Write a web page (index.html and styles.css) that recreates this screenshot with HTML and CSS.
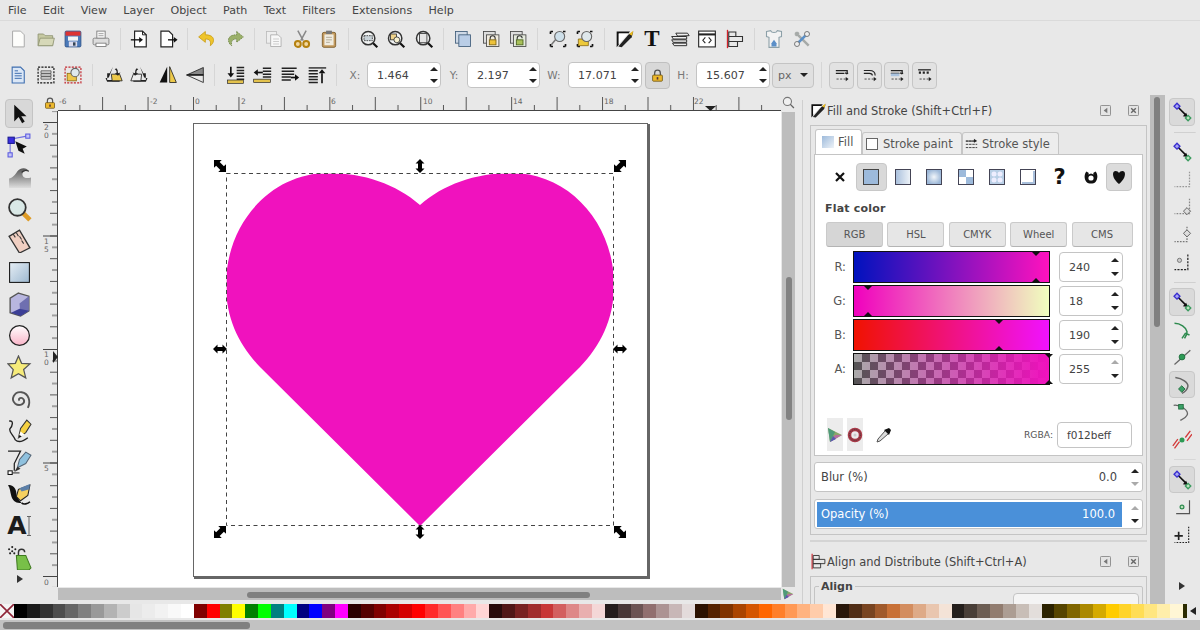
FILE: index.html
```html
<!DOCTYPE html>
<html lang="en">
<head>
<meta charset="utf-8">
<title>Inkscape</title>
<link rel="stylesheet" href="styles.css">
</head>
<body>
<svg class="defs" aria-hidden="true">
  <defs>
    <linearGradient id="gBlue" x1="0" y1="0" x2="1" y2="1"><stop offset="0" stop-color="#e6eef5"/><stop offset="1" stop-color="#9db8d0"/></linearGradient>
    <linearGradient id="gPink" x1="0" y1="0" x2="0" y2="1"><stop offset="0" stop-color="#fff"/><stop offset="1" stop-color="#f9b4c8"/></linearGradient>
    <linearGradient id="gWave" x1="0" y1="0" x2="0" y2="1"><stop offset="0" stop-color="#555"/><stop offset="1" stop-color="#ddd"/></linearGradient>
    <linearGradient id="gFlat" x1="0" y1="0" x2="1" y2="0"><stop offset="0" stop-color="#a8bfdc"/><stop offset="1" stop-color="#eef3f8"/></linearGradient>
    <radialGradient id="gRad"><stop offset="0" stop-color="#f2f6fa"/><stop offset="1" stop-color="#9db8d8"/></radialGradient>
    <pattern id="hTicks" x="193" y="95" width="45.45" height="16" patternUnits="userSpaceOnUse"><path d="M.5 2V16M23.2 10V16" stroke="#555" fill="none"/></pattern>
    <pattern id="vTicks" x="42" y="122" width="16" height="22.7" patternUnits="userSpaceOnUse"><path d="M8 .5H16M10 11.85H16" stroke="#555" fill="none"/></pattern>
    <symbol id="snap" viewBox="0 0 24 24"><path d="M7 6L17 16" stroke="#111" stroke-width="2"/><path d="M19 18l-6-1 4-4z" fill="#111"/><rect x="3.5" y="2.5" width="5" height="5" transform="rotate(45 6 5)" fill="#a9a9f0" stroke="#3a2fd0" stroke-width="1.6"/><rect x="17" y="17" width="4.6" height="4.6" transform="rotate(45 19.3 19.3)" fill="#bfe3bf" stroke="#3a9a5e" stroke-width="1.6"/></symbol>
    <symbol id="zoomBase" viewBox="0 0 24 24"><circle cx="11" cy="11" r="8" fill="#f2f4f4" stroke="#333" stroke-width="1.8"/><path d="M17 17l5 5" stroke="#111" stroke-width="2.6"/></symbol>
    <symbol id="page" viewBox="0 0 24 24"><path d="M5.5 2.5H15L19.5 7V21.5H5.5Z" fill="#fff" stroke="#222" stroke-width="1.4"/><path d="M15 2.5V7H19.5" fill="none" stroke="#222" stroke-width="1.2"/></symbol>
    <symbol id="win" viewBox="0 0 12 12"><rect x=".5" y=".5" width="11" height="11" rx="1" fill="#e4e4e4" stroke="#888"/></symbol>
    <symbol id="align" viewBox="0 0 24 24"><path d="M3 1V23" stroke="#d3232a" stroke-width="1.6"/><path d="M4.500 3.500H13V9H4.500ZM4.500 9H21V15H4.500ZM4.500 15H15V21H4.500Z" fill="#e8e8e8" stroke="#333" stroke-width="1.3"/></symbol>
    <symbol id="pen" viewBox="0 0 24 24"><path d="M2 3H18L16 5.500H4.500V19L2 22Z" fill="#111"/><path d="M4.500 5.500H16L4.500 18Z" fill="#fff"/><path d="M4 21L16 7L22 3L20 10L8 22Z" fill="#222"/><path d="M17 6L22 2L20.500 8Z" fill="#f0c020"/></symbol>
    <symbol id="spectrum" viewBox="0 0 16 16"><path d="M1 1L15 8L3 15Z" fill="#8aa66a"/><path d="M1 1L8 5L3 15Z" fill="#4f9a7a"/><path d="M3 15L8 8L15 8Z" fill="#b66ea0"/><path d="M3 15L6 9L9 12Z" fill="#5a5ab0"/></symbol>
    <symbol id="lock" viewBox="0 0 16 16"><path d="M4.500 8V5A3.500 3.500 0 0 1 11.500 5V8" fill="none" stroke="#555" stroke-width="1.6"/><rect x="2" y="7.500" width="12" height="7.500" rx="1" fill="#edb92e" stroke="#6d5310"/><rect x="7" y="10" width="2" height="3" fill="#533"/></symbol>
    <symbol id="tb" viewBox="0 0 24 24"><path d="M4 5H20V10M20 10L17 8M20 10L21 8M4 9H16" fill="none" stroke="#222" stroke-width="1.8"/><path d="M5 17H8M10 17H13M15 17H18" stroke="#333" stroke-width="1.2"/><path d="M18 14L22 17L18 20Z" fill="#222"/></symbol>
  </defs>
</svg>

<div class="app">
  <nav class="menubar">
    <span>File</span><span>Edit</span><span>View</span><span>Layer</span><span>Object</span><span>Path</span><span>Text</span><span>Filters</span><span>Extensions</span><span>Help</span>
  </nav>

  <div class="toolbar toolbar-one">
    <span class="cell"><svg viewBox="0 0 24 24"><path d="M5.500 2.500H15L19.500 7V21.500H5.500Z" fill="#fdfdfb" stroke="#aaa" stroke-width="1.2"/></svg></span>
    <span class="cell"><svg viewBox="0 0 24 24"><path d="M2.500 6H9L11 8H20V20H2.500Z" fill="#c6c9a2" stroke="#8d9170"/><path d="M2.500 20L5 11H22L20 20Z" fill="#d6d8b8" stroke="#8d9170"/></svg></span>
    <span class="cell"><svg viewBox="0 0 24 24"><rect x="2.500" y="2.500" width="19" height="19" rx="1.500" fill="#4a79b8" stroke="#2c4f85"/><rect x="3" y="3" width="18" height="5" fill="#d33"/><rect x="6" y="9" width="12" height="5" fill="#f4f4f4"/><rect x="7" y="15" width="10" height="6" fill="#dde"/><rect x="12" y="16" width="3" height="4" fill="#345"/></svg></span>
    <span class="cell"><svg viewBox="0 0 24 24"><rect x="7" y="2.500" width="10" height="9" fill="#f6f6f6" stroke="#777"/><path d="M9 5.500H15M9 8H15" stroke="#999"/><rect x="2.500" y="11" width="19" height="8" rx="1.500" fill="#ddd" stroke="#777"/><rect x="6" y="17" width="12" height="4" fill="#fff" stroke="#777"/></svg></span>
    <i class="sep"></i>
    <span class="cell"><svg viewBox="0 0 24 24"><use href="#page"/><path d="M1 13H13" stroke="#111" stroke-width="1.6"/><path d="M11 9.500L15.500 13L11 16.500Z" fill="#111"/></svg></span>
    <span class="cell"><svg viewBox="0 0 24 24"><path d="M3.500 2.500H13L17.500 7V21.500H3.500Z" fill="#fff" stroke="#222" stroke-width="1.4"/><path d="M12 13H21" stroke="#111" stroke-width="1.6"/><path d="M19 9.500L23.500 13L19 16.500Z" fill="#111"/></svg></span>
    <i class="sep"></i>
    <span class="cell"><svg viewBox="0 0 24 24"><path d="M10 3L2 9.500L10 16V12C15 12 17 14 16 20C21 17 23 7 10 7Z" fill="#efc52b" stroke="#c99c16"/></svg></span>
    <span class="cell"><svg viewBox="0 0 24 24"><path d="M14 3L22 9.500L14 16V12C9 12 7 14 8 20C3 17 1 7 14 7Z" fill="#9bb06a" stroke="#6f8546" stroke-dasharray="2 1"/></svg></span>
    <i class="sep"></i>
    <span class="cell"><svg viewBox="0 0 24 24"><rect x="3" y="3" width="12" height="14" fill="#eee" stroke="#bbb"/><path d="M8 7H17L20.500 10.500V21H8Z" fill="#f8f8f8" stroke="#aaa"/><path d="M11 12H18M11 15H18M11 18H18" stroke="#c4c4c4"/></svg></span>
    <span class="cell"><svg viewBox="0 0 24 24"><path d="M7 2L13.500 14M17 2L10.500 14" stroke="#888" stroke-width="1.8"/><circle cx="7" cy="18" r="3.500" fill="#f2d8a0" stroke="#b5810f" stroke-width="2.400"/><circle cx="17" cy="18" r="3.500" fill="#f2d8a0" stroke="#b5810f" stroke-width="2.400"/></svg></span>
    <span class="cell"><svg viewBox="0 0 24 24"><rect x="4" y="4" width="16" height="18" rx="2" fill="#c39a5e" stroke="#7a5a28"/><rect x="6.500" y="6.500" width="11" height="13" fill="#f0ece0"/><rect x="8.500" y="2" width="7" height="4" fill="#777"/><path d="M8.500 10H15.500M8.500 13H15.500M8.500 16H13" stroke="#a8a08c"/></svg></span>
    <i class="sep"></i>
    <span class="cell"><svg viewBox="0 0 24 24"><use href="#zoomBase"/><path d="M6 8H16V14H6Z" fill="#c8d2d8" stroke="#333" stroke-dasharray="2 1"/></svg></span>
    <span class="cell"><svg viewBox="0 0 24 24"><use href="#zoomBase"/><rect x="5.500" y="6" width="7" height="7" fill="#efd38a" stroke="#333"/><circle cx="13" cy="13" r="3.500" fill="#f6f0d0" stroke="#333"/></svg></span>
    <span class="cell"><svg viewBox="0 0 24 24"><use href="#zoomBase"/><rect x="6.500" y="5.500" width="9" height="11" fill="#e4e4e4" stroke="#333"/></svg></span>
    <i class="sep"></i>
    <span class="cell"><svg viewBox="0 0 24 24"><rect x="3" y="3" width="14" height="14" fill="#cfd9e6" stroke="#3d5a78"/><rect x="7" y="7" width="14" height="14" fill="#b9cde6" stroke="#3d5a78"/></svg></span>
    <span class="cell"><svg viewBox="0 0 24 24"><rect x="3" y="3" width="14" height="14" fill="#ddd" stroke="#444"/><rect x="6.500" y="7" width="15" height="14" fill="#f1ece0" stroke="#444"/><path d="M11 13V11A3 3 0 0 1 17 11V13" fill="none" stroke="#333" stroke-width="1.300"/><rect x="10" y="13" width="8" height="6" fill="#edc23a" stroke="#7a6010"/></svg></span>
    <span class="cell"><svg viewBox="0 0 24 24"><rect x="3" y="3" width="14" height="14" fill="#ddd" stroke="#444"/><rect x="6.500" y="7" width="15" height="14" fill="#e4eadc" stroke="#444"/><path d="M11 13V11A3 3 0 0 1 17 11" fill="none" stroke="#333" stroke-width="1.300"/><rect x="10" y="13" width="8" height="6" fill="#a8c05a" stroke="#46601a"/></svg></span>
    <i class="sep"></i>
    <span class="cell"><svg viewBox="0 0 24 24"><path d="M3 3H6M3 3V6M21 3H18M3 21V18M3 21H6M21 21H18M21 21V18" stroke="#111" stroke-width="2"/><circle cx="14" cy="9" r="6" fill="#cfe0ea" stroke="#666" stroke-width="1.300"/><path d="M9 13L4 19" stroke="#777" stroke-width="1.800"/></svg></span>
    <span class="cell"><svg viewBox="0 0 24 24"><path d="M3 3H6M3 3V6M21 3H18M3 21V18M3 21H6M21 21H18M21 21V18" stroke="#111" stroke-width="2"/><path d="M4 12H16V20H4Z" fill="#edc93b" stroke="#8a6c14"/><circle cx="14" cy="9" r="6" fill="#dfe8ec" stroke="#666" stroke-width="1.300"/></svg></span>
    <i class="sep"></i>
    <span class="cell"><svg viewBox="0 0 24 24"><use href="#pen"/></svg></span>
    <span class="cell"><span class="t-glyph">T</span></span>
    <span class="cell"><svg viewBox="0 0 24 24"><path d="M7 5H21L23 8L9 8.500ZM2 9H20V12H4ZM2 13H20V16H4ZM3 17H20V20H5Z" fill="#eee" stroke="#222" stroke-width="1.100"/></svg></span>
    <span class="cell"><svg viewBox="0 0 24 24"><rect x="2" y="2.500" width="20" height="19" fill="#fff" stroke="#222" stroke-width="1.300"/><path d="M2 6.500H22" stroke="#222" stroke-width="2.500"/><path d="M10 10L7 13.500L10 17M14 10L17 13.500L14 17" fill="none" stroke="#222" stroke-width="1.300"/></svg></span>
    <span class="cell"><svg viewBox="0 0 24 24"><use href="#align"/></svg></span>
    <i class="sep"></i>
    <span class="cell"><svg viewBox="0 0 24 24"><path d="M3 3L8 2C9 5 15 5 16 2L21 3V9L18 10V22H6V10L3 9Z" fill="#f3f3f3" stroke="#8ca0a8" stroke-width="1.300"/><path d="M9 17L12 13L15 17V21H9Z" fill="#5b8fc8"/></svg></span>
    <span class="cell"><svg viewBox="0 0 24 24"><path d="M4 4L20 20M4 8L8 4" stroke="#a6aaa8" stroke-width="3"/><path d="M20 4L4 20" stroke="#5b90c8" stroke-width="3.200"/><circle cx="6" cy="18" r="3" fill="#eee" stroke="#666"/><circle cx="18" cy="6" r="3" fill="#eee" stroke="#666"/></svg></span>
  </div>

  <div class="toolbar toolbar-two">
    <span class="cell"><svg viewBox="0 0 24 24"><path d="M5 2.500H15L19.500 7V21.500H5Z" fill="#dbe7f6" stroke="#3f6eaf" stroke-width="1.300"/><path d="M8 10H16.500M8 13H16.500M8 16H16.500M8 7H12" stroke="#3f6eaf" stroke-width="1.200"/></svg></span>
    <span class="cell"><svg viewBox="0 0 24 24"><rect x="2.500" y="2.500" width="19" height="19" fill="none" stroke="#111" stroke-width="1.400" stroke-dasharray="2.500 1.500"/><path d="M6 7H18V10H6ZM6 10.500H18V13.500H6ZM6 14H18V17H6Z" fill="#d8d8d8" stroke="#555"/></svg></span>
    <span class="cell"><svg viewBox="0 0 24 24"><rect x="2.500" y="2.500" width="19" height="19" fill="none" stroke="#c2262c" stroke-width="1.400" stroke-dasharray="2.500 1.500"/><rect x="5" y="10" width="11" height="9" fill="#edc64a" stroke="#8a6c14"/><circle cx="14.500" cy="9" r="5" fill="#dfe9ef" stroke="#666" stroke-width="1.300"/></svg></span>
    <i class="sep"></i>
    <span class="cell"><svg viewBox="0 0 24 24"><path d="M12 2L8 10H5V18H20V20H5L3 16L7 15Z" fill="#222"/><path d="M10 11H20L23 19H11Z" fill="#edc94a" stroke="#222"/><path d="M16 4A6 6 0 0 1 18 10L21 9L18 13L14 10L16 10A4 4 0 0 0 14 5Z" fill="#222"/></svg></span>
    <span class="cell"><svg viewBox="0 0 24 24"><path d="M12 2L16 10H19V18H4V20H19L21 16L17 15Z" fill="#222"/><path d="M14 11H4L1 19H13Z" fill="#eee" stroke="#222"/><path d="M8 4A6 6 0 0 0 6 10L3 9L6 13L10 10L8 10A4 4 0 0 1 10 5Z" fill="#222"/></svg></span>
    <span class="cell"><svg viewBox="0 0 24 24"><path d="M11 2V21H2Z" fill="#111"/><path d="M14 2V21H22Z" fill="#edc94a" stroke="#222"/></svg></span>
    <span class="cell"><svg viewBox="0 0 24 24"><path d="M2 12L22 3V12Z" fill="#888" stroke="#222"/><path d="M2 12L22 21V12Z" fill="#e8e8e8" stroke="#222"/><path d="M4 12H22" stroke="#111" stroke-width="1.500"/></svg></span>
    <i class="sep"></i>
    <span class="cell"><svg viewBox="0 0 24 24"><path d="M14 3H23M14 6.500H23M14 10H23M14 13.500H23M14 17H23" stroke="#222" stroke-width="1.800"/><path d="M7 2V12" stroke="#111" stroke-width="2"/><path d="M3 10L7 15L11 10Z" fill="#111"/><rect x="3" y="18" width="19" height="4" fill="#e3c24d" stroke="#222" stroke-width=".8"/></svg></span>
    <span class="cell"><svg viewBox="0 0 24 24"><path d="M13 4H23M13 7.500H23M13 11H23M13 14.500H23" stroke="#222" stroke-width="1.800"/><path d="M6 9H13" stroke="#111" stroke-width="2"/><path d="M7 5L2 9L7 13Z" fill="#111"/><rect x="2" y="17" width="20" height="4" fill="#e3c24d" stroke="#222" stroke-width=".8"/></svg></span>
    <span class="cell"><svg viewBox="0 0 24 24"><path d="M2 4H20M2 7.500H17M2 11H17M2 14.500H13M2 18H13" stroke="#222" stroke-width="1.800"/><path d="M13 15H19" stroke="#111" stroke-width="2"/><path d="M18 11L23 15L18 19Z" fill="#111"/></svg></span>
    <span class="cell"><svg viewBox="0 0 24 24"><path d="M2 3.500H23" stroke="#222" stroke-width="1.600"/><path d="M2 7H13M2 10.500H13M2 14H13M2 17.500H13M2 21H13" stroke="#222" stroke-width="1.800"/><path d="M18 10V22" stroke="#111" stroke-width="2"/><path d="M14 10L18 5L22 10Z" fill="#111"/></svg></span>
    <i class="sep"></i>
    <label class="coord coord-x">X:</label>
    <div class="spin spin-x"><span class="val">1.464</span><span class="arrows"><b class="up"></b><b class="down"></b></span></div>
    <label class="coord coord-y">Y:</label>
    <div class="spin spin-y"><span class="val">2.197</span><span class="arrows"><b class="up"></b><b class="down"></b></span></div>
    <label class="coord coord-w">W:</label>
    <div class="spin spin-x"><span class="val">17.071</span><span class="arrows"><b class="up"></b><b class="down"></b></span></div>
    <span class="lockbtn"><svg viewBox="0 0 16 16"><use href="#lock"/></svg></span>
    <label class="coord coord-h">H:</label>
    <div class="spin spin-x"><span class="val">15.607</span><span class="arrows"><b class="up"></b><b class="down"></b></span></div>
    <div class="combo"><span>px</span><b class="down"></b></div>
    <i class="sep sep-wide"></i>
    <div class="transform-btns">
      <span class="tbtn"><svg viewBox="0 0 24 24"><use href="#tb"/></svg></span>
      <span class="tbtn"><svg viewBox="0 0 24 24"><path d="M4 5H12C17 5 20 8 20 12M4 9H12C14 9 16 10 16 12" fill="none" stroke="#222" stroke-width="1.600"/><path d="M5 17H8M10 17H13M15 17H18" stroke="#333" stroke-width="1.200"/><path d="M18 14L22 17L18 20Z" fill="#222"/></svg></span>
      <span class="tbtn"><svg viewBox="0 0 24 24"><use href="#tb"/><rect x="4" y="9" width="12" height="4" fill="#a9c3e0"/></svg></span>
      <span class="tbtn"><svg viewBox="0 0 24 24"><path d="M3 4H21" stroke="#222" stroke-width="1.800"/><path d="M4 8H7M9.500 8H12.500M15 8H18" stroke="#222" stroke-width="3"/><path d="M5 17H8M10 17H13M15 17H18" stroke="#333" stroke-width="1.200"/><path d="M18 14L22 17L18 20Z" fill="#222"/></svg></span>
    </div>
  </div>

  <div class="main">
    <aside class="tools">
      <span class="tool tool-active"><svg viewBox="0 0 24 24"><path d="M6 2V21L11 16L15 23L18 21L14 15H20Z" fill="#111"/></svg></span>
      <span class="tool"><svg viewBox="0 0 24 24"><path d="M3 6L19 3M3 6L3 21" stroke="#6a6ae0"/><rect x="1" y="4" width="6" height="6" fill="#3b2ee0" stroke="#1a1a90"/><rect x="18" y="1" width="4" height="4" fill="#c6c6f5" stroke="#5a5ae0"/><rect x="1" y="19" width="4" height="4" fill="#c6c6f5" stroke="#5a5ae0"/><path d="M8 8L19 13L15 15L17 20L11 17Z" fill="#111"/></svg></span>
      <span class="tool"><svg viewBox="0 0 24 24"><path d="M2 22V13C5 13 8 9 10 6C13 2 19 2 21 6C17 5 14 7 15 10C16 13 20 13 23 12V22Z" fill="url(#gWave)"/><path d="M14 7C16 5 19 5 21 6" stroke="#333" fill="none"/></svg></span>
      <span class="tool"><svg viewBox="0 0 24 24"><path d="M14 14L22 22" stroke="#de9c26" stroke-width="4.500"/><circle cx="10" cy="10" r="8" fill="#d9e8e6" stroke="#333" stroke-width="1.700"/></svg></span>
      <span class="tool"><svg viewBox="0 0 24 24"><path d="M2 8L12 2L22 19L12 24Z" fill="#f0cfc2" stroke="#333" stroke-width="1.300"/><path d="M6 6L8 9M9 4.500L11 8M12 8L14 11M14 12L16 15" stroke="#333"/></svg></span>
      <span class="tool"><svg viewBox="0 0 24 24"><rect x="2.500" y="2.500" width="19" height="19" fill="url(#gBlue)" stroke="#111"/></svg></span>
      <span class="tool"><svg viewBox="0 0 24 24"><path d="M11 1L21 4V18L13 23L3 20V6Z" fill="#b8b6df" stroke="#555" stroke-width="1.300"/><path d="M3 6L12 11L21 4V18L13 23L12 11" fill="#6f6fb0"/><path d="M12 16L21 18L13 23L4 20Z" fill="#3c3f96"/></svg></span>
      <span class="tool"><svg viewBox="0 0 24 24"><circle cx="12" cy="12" r="9.500" fill="url(#gPink)" stroke="#222" stroke-width="1.200"/></svg></span>
      <span class="tool"><svg viewBox="0 0 24 24"><path d="M11 1L14 8L22 8.500L16 14L18 22L11 18L4 22L6 14L1 8.500L8 8Z" fill="#f6eb7a" stroke="#555" stroke-width="1.200"/></svg></span>
      <span class="tool"><svg viewBox="0 0 24 24"><path d="M12 13C10 11 14 9 16 12C18 16 12 19 8 16C3 12 7 4 14 5C21 6 23 14 20 20" fill="none" stroke="#555" stroke-width="1.800"/></svg></span>
      <span class="tool"><svg viewBox="0 0 24 24"><path d="M2 3C7 2 5 8 3 10C1 13 6 16 8 21C11 24 16 22 20 19" fill="none" stroke="#222" stroke-width="1.300"/><path d="M11 19L13 10L19 2L23 6L18 14Z" fill="#f5d040" stroke="#333"/><path d="M11 19L13 13L17 16Z" fill="#fff"/><path d="M11 19L12 16L14 18Z" fill="#111"/></svg></span>
      <span class="tool"><svg viewBox="0 0 24 24"><path d="M1 1H13L7 13V20" fill="none" stroke="#222" stroke-width="1.200"/><rect x="1" y="20" width="4" height="3.500" fill="#fff" stroke="#111"/><path d="M5 22H12" stroke="#333"/><path d="M10 17L12 9L18 2L23 5L18 13Z" fill="#8fc1de" stroke="#567"/><path d="M7 21L10 16L13 18Z" fill="#333"/></svg></span>
      <span class="tool"><svg viewBox="0 0 24 24"><path d="M1 3C5 2 9 6 9 11C9 14 12 18 14 20C9 21 5 18 4 13C3 9 3 6 1 3Z" fill="#111"/><path d="M14 20C16 22 20 21 22 19" fill="none" stroke="#111" stroke-width="1.500"/><path d="M9 14L11 7L22 3L20 13L13 18Z" fill="#f5d060" stroke="#222"/><path d="M12 6L22 2L21.500 7L14 9Z" fill="#5b7fa8"/></svg></span>
      <span class="tool tool-text"><span class="a-glyph">A</span><svg class="ibeam" viewBox="0 0 4 20"><path d="M0 .5H4M2 .5V19.500M0 19.500H4" stroke="#666" fill="none"/></svg></span>
      <span class="tool"><svg viewBox="0 0 24 24"><circle cx="2" cy="4" r="1" fill="#222"/><circle cx="5" cy="2" r="1" fill="#222"/><circle cx="5" cy="6" r="1" fill="#222"/><circle cx="8" cy="4" r="1" fill="#222"/><circle cx="3" cy="8" r="1" fill="#222"/><circle cx="7" cy="8" r="1" fill="#222"/><path d="M11 10V7A3 3 0 0 1 17 7" fill="none" stroke="#333" stroke-width="1.400"/><path d="M9 10H18L23 22L21 24H10Z" fill="#78c048" stroke="#3f7a20"/></svg></span>
      <b class="more"></b>
    </aside>

    <section class="workspace">
      <div class="corner"><svg viewBox="0 0 16 16"><use href="#lock"/></svg></div>
      <svg class="hruler" viewBox="58 95 723 16">
        <rect x="58" y="95" width="723" height="16" fill="url(#hTicks)"/>
        <path d="M58 110.500H781" stroke="#444"/>
        <g class="rtext"><text x="59" y="104">-6</text><text x="150" y="104">-2</text><text x="195" y="104">0</text><text x="241" y="104">2</text><text x="331" y="104">6</text><text x="423" y="104">10</text><text x="513" y="104">14</text><text x="604" y="104">18</text><text x="694" y="104">22</text></g>
        <path d="M705 106H716L710.500 111Z" fill="#222"/>
      </svg>
      <div class="corner-r"><svg viewBox="0 0 24 24"><circle cx="10" cy="10" r="7.500" fill="#f0f0f0" stroke="#777" stroke-width="2"/><path d="M15 15L22 22" stroke="#666" stroke-width="2.500"/></svg></div>
      <svg class="vruler" viewBox="42 111 16 476">
        <rect x="42" y="111" width="16" height="476" fill="url(#vTicks)"/>
        <path d="M57.500 111V587M43 122.500H58M43 236H58M43 349.500H58M43 463H58M43 576.500H58" stroke="#444"/>
        <g class="rtext"><text x="44" y="130">2</text><text x="44" y="138">0</text><text x="44" y="244">1</text><text x="44" y="252">5</text><text x="44" y="357">1</text><text x="44" y="365">0</text><text x="44" y="471">5</text><text x="44" y="585">0</text></g>
        <path d="M53 351V363L58 357Z" fill="#222"/>
      </svg>
      <svg class="canvas" viewBox="58 111 723 476">
        <rect x="58" y="111" width="723" height="476" fill="#fff"/>
        <rect x="194" y="124" width="456" height="455" fill="#666"/>
        <rect x="193.500" y="123.500" width="454" height="453" fill="#fff" stroke="#666"/>
        <path d="M420 205C396 184 364 173 328 173C272 173 226 222 226 285C226 320 240 346 260 367L420 526L580 367C600 346 614 320 614 285C614 222 568 173 512 173C476 173 444 184 420 205Z" fill="#f012be"/>
        <rect x="226.500" y="173.500" width="387" height="352" fill="none" stroke="#fff" stroke-opacity=".7"/>
        <rect x="226.500" y="173.500" width="387" height="352" fill="none" stroke="#444" stroke-dasharray="4 3.500"/>
        <defs>
          <path id="handleDiag" d="M-8.500 0L-3-5.500V-2.500H3V-5.500L8.500 0L3 5.500V2.500H-3V5.500Z" fill="#000"/>
          <path id="handleAxis" d="M-7 0L-2.500-4.500V-2H2.500V-4.500L7 0L2.500 4.500V2H-2.500V4.500Z" fill="#000"/>
        </defs>
        <use href="#handleDiag" transform="translate(220 166) rotate(45)"/>
        <use href="#handleAxis" transform="translate(420 166) rotate(90)"/>
        <use href="#handleDiag" transform="translate(620 166) rotate(-45)"/>
        <use href="#handleAxis" transform="translate(220 349)"/>
        <use href="#handleAxis" transform="translate(620 349)"/>
        <use href="#handleDiag" transform="translate(220 532) rotate(-45)"/>
        <use href="#handleAxis" transform="translate(420 532) rotate(90)"/>
        <use href="#handleDiag" transform="translate(620 532) rotate(45)"/>
      </svg>
      <div class="vtrough"><i class="vthumb"></i></div>
      <div class="hspacer"></div>
      <div class="htrough"><i class="hthumb"></i></div>
      <div class="cms"><svg viewBox="0 0 16 16"><use href="#spectrum"/></svg></div>
    </section>

    <aside class="dock">
      <div class="dock-inner">
        <header class="dock-title">
          <svg class="dock-icon" viewBox="0 0 24 24"><use href="#pen"/></svg>
          <span>Fill and Stroke (Shift+Ctrl+F)</span>
          <span class="dock-btns">
            <svg viewBox="0 0 12 12"><use href="#win"/><path d="M8 3V9L4 6Z" fill="#777"/></svg>
            <svg viewBox="0 0 12 12"><use href="#win"/><path d="M3.500 3.500L8.500 8.500M8.500 3.500L3.500 8.500" stroke="#666" stroke-width="1.500"/></svg>
          </span>
        </header>
        <div class="frame">
          <div class="tabs">
            <span class="tab tab-on"><i class="swatch-fill"></i>Fill</span>
            <span class="tab tab-paint"><i class="swatch-empty"></i>Stroke paint</span>
            <span class="tab tab-style"><svg viewBox="0 0 16 16"><path d="M1 5H12M1 9H15M1 13H15" stroke="#222" stroke-dasharray="3 1"/><path d="M1 5H12" stroke="#222"/><path d="M11 2L15 5L11 7Z" fill="#222"/></svg>Stroke style</span>
          </div>
          <div class="page">
            <div class="paint-row">
              <span class="paint"><svg viewBox="0 0 16 16"><path d="M4 4L12 12M12 4L4 12" stroke="#111" stroke-width="2.200"/></svg></span>
              <span class="paint paint-on"><svg viewBox="0 0 16 16"><rect x=".5" y=".5" width="15" height="15" fill="#9dbadb" stroke="#444"/></svg></span>
              <span class="paint"><svg viewBox="0 0 16 16"><rect x=".5" y=".5" width="15" height="15" fill="url(#gFlat)" stroke="#445"/></svg></span>
              <span class="paint"><svg viewBox="0 0 16 16"><rect x=".5" y=".5" width="15" height="15" fill="url(#gRad)" stroke="#445"/></svg></span>
              <span class="paint"><svg viewBox="0 0 16 16"><rect x=".5" y=".5" width="15" height="15" fill="#fff" stroke="#445"/><path d="M1 1H8V8H1ZM8 8H15V15H8Z" fill="#9dbadb"/></svg></span>
              <span class="paint"><svg viewBox="0 0 16 16"><rect x=".5" y=".5" width="15" height="15" fill="#b9cfe6" stroke="#445"/><circle cx="5" cy="5" r="2.500" fill="#eef"/><circle cx="11" cy="5" r="2.500" fill="#eef"/><circle cx="5" cy="11" r="2.500" fill="#eef"/><circle cx="11" cy="11" r="2.500" fill="#eef"/></svg></span>
              <span class="paint"><svg viewBox="0 0 16 16"><rect x=".5" y=".5" width="15" height="15" fill="#fff" stroke="#445"/><path d="M14 2V14H2" fill="none" stroke="#a9c0dc" stroke-width="2"/></svg></span>
              <span class="paint"><span class="q-glyph">?</span></span>
              <span class="paint"><svg viewBox="0 0 16 16"><path d="M3.500 2.500C1 5 1 10 3.500 13C5.500 15 10.500 15 12.500 13C15 10 15 5 12.500 2.500L9.500 4.500C10.500 4 10.500 4.500 10.500 5.500L8 4.500L5.500 5.500C5.500 4.500 5.500 4 6.500 4.500Z" fill="#111"/><circle cx="8" cy="9" r="2.600" fill="#fff"/></svg></span>
              <span class="paint paint-heart"><svg viewBox="0 0 16 16"><path d="M8 4C7 2 4 1 2.500 3C1 6 3 11 8 15C13 11 15 6 13.500 3C12 1 9 2 8 4Z" fill="#111"/></svg></span>
            </div>
            <div class="flat-label">Flat color</div>
            <div class="modes"><span class="mode mode-on mode-rgb">RGB</span><span class="mode">HSL</span><span class="mode">CMYK</span><span class="mode">Wheel</span><span class="mode mode-cms">CMS</span></div>
            <div class="sliders">
              <span class="slabel">R:</span>
              <div class="bar bar-r" style="--v:93.5%"><i class="mk-top"></i><i class="mk-bot"></i></div>
              <div class="spin spin-s"><span class="val">240</span><span class="arrows"><b class="up"></b><b class="down"></b></span></div>
              <span class="slabel">G:</span>
              <div class="bar bar-g" style="--v:7%"><i class="mk-top"></i><i class="mk-bot"></i></div>
              <div class="spin spin-s"><span class="val">18</span><span class="arrows"><b class="up"></b><b class="down"></b></span></div>
              <span class="slabel">B:</span>
              <div class="bar bar-b" style="--v:74.500%"><i class="mk-top"></i><i class="mk-bot"></i></div>
              <div class="spin spin-s"><span class="val">190</span><span class="arrows"><b class="up"></b><b class="down"></b></span></div>
              <span class="slabel">A:</span>
              <div class="bar bar-a" style="--v:100%"><i class="mk-top"></i><i class="mk-bot"></i></div>
              <div class="spin spin-s"><span class="val">255</span><span class="arrows"><b class="up up-dim"></b><b class="down"></b></span></div>
            </div>
            <div class="page-foot">
              <span class="foot-btn"><svg viewBox="0 0 16 16"><use href="#spectrum"/></svg></span>
              <span class="foot-btn"><svg viewBox="0 0 16 16"><circle cx="8" cy="8" r="5.500" fill="none" stroke="#a83a48" stroke-width="3.500"/><circle cx="8" cy="8" r="5.500" fill="none" stroke="#333" stroke-width=".8" stroke-dasharray="1 1"/><circle cx="8" cy="8" r="1.500" fill="#ccc"/></svg></span>
              <span class="picker"><svg viewBox="0 0 16 16"><path d="M9 4L2 12L1 15L4 14L12 7" fill="#ddd" stroke="#555"/><path d="M8 3L13 8L15 3L13 1Z" fill="#111"/></svg></span>
              <span class="rgba-label">RGBA:</span>
              <span class="rgba">f012beff</span>
            </div>
          </div>
          <div class="meter"><span>Blur (%)</span><span class="meter-val">0.0</span><span class="arrows"><b class="up"></b><b class="down down-dim"></b></span></div>
          <div class="meter meter-full"><span class="meter-fill"><span>Opacity (%)</span><span>100.0</span></span><span class="arrows"><b class="up up-dim"></b><b class="down"></b></span></div>
        </div>
        <hr class="dock-rule">
        <header class="dock-title dock-title-2">
          <svg class="dock-icon" viewBox="0 0 24 24"><use href="#align"/></svg>
          <span>Align and Distribute (Shift+Ctrl+A)</span>
          <span class="dock-btns">
            <svg viewBox="0 0 12 12"><use href="#win"/><path d="M8 3V9L4 6Z" fill="#777"/></svg>
            <svg viewBox="0 0 12 12"><use href="#win"/><path d="M3.500 3.500L8.500 8.500M8.500 3.500L3.500 8.500" stroke="#666" stroke-width="1.500"/></svg>
          </span>
        </header>
        <div class="frame frame-2">
          <fieldset class="group"><legend>Align</legend><div class="mini-input"></div></fieldset>
        </div>
      </div>
    </aside>

    <div class="dock-scroll"><i class="dock-thumb"></i></div>

    <aside class="snapbar">
      <span class="snap snap-on"><svg viewBox="0 0 24 24"><use href="#snap"/></svg></span>
      <i class="snap-sep"></i>
      <span class="snap"><svg viewBox="0 0 24 24"><use href="#snap"/></svg></span>
      <span class="snap"><svg viewBox="0 0 24 24"><path d="M21 2V20H3" fill="none" stroke="#999" stroke-width="1.500" stroke-dasharray="2 1.500"/></svg></span>
      <span class="snap"><svg viewBox="0 0 24 24"><path d="M21 2V20H3" fill="none" stroke="#888" stroke-width="1.500" stroke-dasharray="2 1.500"/><rect x="15" y="14" width="6" height="6" transform="rotate(45 18 17)" fill="#ddd" stroke="#555"/></svg></span>
      <span class="snap"><svg viewBox="0 0 24 24"><path d="M18 2V20H3" fill="none" stroke="#777" stroke-width="1.500" stroke-dasharray="2 1.500"/><rect x="15" y="7" width="6" height="6" transform="rotate(45 18 10)" fill="#ddd" stroke="#555"/></svg></span>
      <span class="snap"><svg viewBox="0 0 24 24"><path d="M19 3V21H3" fill="none" stroke="#222" stroke-width="1.500" stroke-dasharray="2.500 1.500"/><circle cx="9" cy="10" r="2.500" fill="#ccc" stroke="#666"/></svg></span>
      <i class="snap-sep"></i>
      <span class="snap snap-on"><svg viewBox="0 0 24 24"><use href="#snap"/></svg></span>
      <span class="snap"><svg viewBox="0 0 24 24"><path d="M3 4C10 4 17 9 18 14C18 18 16 20 15 22" fill="none" stroke="#2d8a4e" stroke-width="1.800"/><path d="M12 22L16 16L21 18" fill="none" stroke="#2d8a4e" stroke-width="1.800"/></svg></span>
      <span class="snap"><svg viewBox="0 0 24 24"><path d="M3 21L22 4" stroke="#666" stroke-width="1.500"/><circle cx="12" cy="12" r="3.500" fill="#2d9a55" stroke="#1d6a3a"/></svg></span>
      <span class="snap snap-on"><svg viewBox="0 0 24 24"><path d="M4 3C12 4 20 9 19 14C18 19 14 21 12 22" fill="none" stroke="#666" stroke-width="1.800"/><rect x="9" y="14" width="5.500" height="5.500" transform="rotate(45 11.700 16.700)" fill="#3aa066" stroke="#1d6a3a"/></svg></span>
      <span class="snap"><svg viewBox="0 0 24 24"><path d="M2 4C10 3 21 10 18 16C16 20 12 21 10 22" fill="none" stroke="#666" stroke-width="1.500"/><rect x="8" y="3" width="5.500" height="5.500" fill="#3aa066" stroke="#1d6a3a"/></svg></span>
      <span class="snap"><svg viewBox="0 0 24 24"><path d="M3 22L9 14M1 19L7 11M16 9L22 1M18 13L24 5" stroke="#d23a3a" stroke-width="1.600"/><circle cx="12" cy="12" r="3" fill="#2d9a55"/></svg></span>
      <i class="snap-sep snap-sep-faint"></i>
      <span class="snap snap-on"><svg viewBox="0 0 24 24"><use href="#snap"/></svg></span>
      <span class="snap"><svg viewBox="0 0 24 24"><path d="M21 4V20H5" fill="none" stroke="#555" stroke-width="1.400"/><circle cx="12" cy="12" r="2.300" fill="#b8e0b8" stroke="#2d8a4e" stroke-width="1.400"/></svg></span>
      <span class="snap"><svg viewBox="0 0 24 24"><path d="M8 8V18M3 13H13" stroke="#222" stroke-width="2"/><path d="M20 2V21H3" fill="none" stroke="#222" stroke-width="1.400" stroke-dasharray="2 1.500"/></svg></span>
      <b class="more more-snap"></b>
    </aside>
  </div>

  <div class="palette">
    <span class="nocolor"><svg viewBox="0 0 14 14"><rect width="14" height="14" fill="#f4f4f4"/><path d="M0 0L14 14M14 0L0 14" stroke="#8f2438" stroke-width="1.600"/></svg></span>
    <div class="swatches">
      <i style="background:#000"></i><i style="background:#1a1a1a"></i><i style="background:#333"></i><i style="background:#4d4d4d"></i><i style="background:#666"></i><i style="background:#808080"></i><i style="background:#999"></i><i style="background:#b3b3b3"></i><i style="background:#ccc"></i><i style="background:#e6e6e6"></i><i style="background:#ececec"></i><i style="background:#f2f2f2"></i><i style="background:#f9f9f9"></i><i style="background:#fff"></i>
      <i style="background:#800000"></i><i style="background:#f00"></i><i style="background:#808000"></i><i style="background:#ff0"></i><i style="background:#008000"></i><i style="background:#0f0"></i><i style="background:#008080"></i><i style="background:#0ff"></i><i style="background:#000080"></i><i style="background:#00f"></i><i style="background:#800080"></i><i style="background:#f0f"></i>
      <i style="background:#2b0000"></i><i style="background:#500"></i><i style="background:#800000"></i><i style="background:#a00"></i><i style="background:#d40000"></i><i style="background:#f00"></i><i style="background:#ff2a2a"></i><i style="background:#f55"></i><i style="background:#ff8080"></i><i style="background:#faa"></i><i style="background:#ffd5d5"></i>
      <i style="background:#280b0b"></i><i style="background:#501616"></i><i style="background:#782121"></i><i style="background:#a02c2c"></i><i style="background:#c83737"></i><i style="background:#d35f5f"></i><i style="background:#de8787"></i><i style="background:#e9afaf"></i><i style="background:#f4d7d7"></i>
      <i style="background:#241c1c"></i><i style="background:#483737"></i><i style="background:#6c5353"></i><i style="background:#916f6f"></i><i style="background:#ac9393"></i><i style="background:#c8b7b7"></i><i style="background:#e3dbdb"></i>
      <i style="background:#2b1100"></i><i style="background:#520"></i><i style="background:#803300"></i><i style="background:#a40"></i><i style="background:#d45500"></i><i style="background:#f60"></i><i style="background:#ff7f2a"></i><i style="background:#f95"></i><i style="background:#ffb380"></i><i style="background:#fca"></i><i style="background:#ffe6d5"></i>
      <i style="background:#28170b"></i><i style="background:#502d16"></i><i style="background:#784421"></i><i style="background:#a05a2c"></i><i style="background:#c87137"></i><i style="background:#d38d5f"></i><i style="background:#deaa87"></i><i style="background:#e9c6af"></i><i style="background:#f4e3d7"></i>
      <i style="background:#241f1c"></i><i style="background:#483e37"></i><i style="background:#6c5d53"></i><i style="background:#917c6f"></i><i style="background:#ac9d93"></i><i style="background:#c8beb7"></i><i style="background:#e3dedb"></i>
      <i style="background:#2b2200"></i><i style="background:#540"></i><i style="background:#806600"></i><i style="background:#a80"></i><i style="background:#d4aa00"></i><i style="background:#fc0"></i><i style="background:#ffd42a"></i><i style="background:#fd5"></i><i style="background:#ffe680"></i><i style="background:#fea"></i><i style="background:#fff6d5"></i>
      <i class="swatch-end" style="background:#2b2b00"></i>
    </div>
    <b class="pal-arrow"></b>
  </div>

  <div class="bottom"><i class="bottom-thumb"></i></div>
</div>
</body>
</html>
```
FILE: styles.css
```css
* { box-sizing: border-box; }
html, body { margin: 0; padding: 0; }
body {
  width: 1200px;
  height: 630px;
  overflow: hidden;
  background: #e8e8e8;
  color: #3a3a3a;
  font-family: "DejaVu Sans", "Liberation Sans", sans-serif;
  font-size: 11px;
}
.defs { display: block; width: 0; height: 0; }
svg { display: block; }
i, b { display: block; font-style: normal; }

.app { display: flex; flex-direction: column; width: 1200px; height: 630px; }

/* menu */
.menubar {
  display: flex; align-items: center; gap: 16.300px;
  height: 21px; padding: 1px 8px 0;
  border-bottom: 1px solid #dadada;
  font-size: 11.100px; color: #444;
}

/* toolbars */
.toolbar { display: flex; align-items: center; padding-left: 4.250px; }
.toolbar-one { height: 36px; }
.toolbar-two { height: 35px; padding-top: 1px; }
.cell { display: flex; justify-content: center; align-items: center; flex: 0 0 27.500px; }
.cell svg { width: 20px; height: 20px; }
.sep { flex: 0 0 12px; height: 22px; background: linear-gradient(#d6d6d6, #d6d6d6) center / 1px 100% no-repeat; }
.sep-wide { flex-basis: 15px; height: 26px; }
.t-glyph { font-family: "Liberation Serif", serif; font-weight: 700; font-size: 23px; line-height: 20px; color: #111; }
.a-glyph { font-family: "DejaVu Sans", sans-serif; font-weight: 700; font-size: 25px; line-height: 22px; color: #1c1c1c; }
.q-glyph { font-family: "DejaVu Sans", sans-serif; font-weight: 700; font-size: 21px; line-height: 22px; color: #111; }

/* coordinates */
.coord { text-align: center; color: #777; font-size: 10.500px; }
.coord-x { flex: 0 0 24.250px; }
.coord-y { flex: 0 0 26px; }
.coord-w { flex: 0 0 28px; }
.coord-h { flex: 0 0 26px; }
.spin {
  display: flex; align-items: center; justify-content: space-between;
  height: 26px; background: #fff; border: 1px solid #c4c4c4; border-radius: 4px;
  padding: 0 0 0 9px; font-size: 11.100px; color: #444;
}
.spin-x { flex: 0 0 74px; }
.spin-y { flex: 0 0 73px; }
.arrows { display: flex; flex-direction: column; gap: 8px; flex: 0 0 auto; width: 12px; align-items: center; }
.up, .down { width: 0; height: 0; border-left: 4px solid transparent; border-right: 4px solid transparent; }
.up { border-bottom: 4.500px solid #222; }
.down { border-top: 4.500px solid #222; }
.up-dim { border-bottom-color: #aaa; }
.down-dim { border-top-color: #aaa; }
.lockbtn {
  display: flex; align-items: center; justify-content: center;
  flex: 0 0 25px; height: 27px; margin-left: 3px;
  background: #d8d8d8; border: 1px solid #c0c0c0; border-radius: 4px;
}
.lockbtn svg { width: 13px; height: 13px; }
.combo {
  display: flex; align-items: center; justify-content: space-between;
  flex: 0 0 42px; height: 25px; margin-left: 2px; padding: 0 5px 0 5px;
  background: #e0e0e0; border: 1px solid #c4c4c4; border-radius: 4px; color: #666;
}
.transform-btns { display: flex; gap: 2.500px; }
.tbtn {
  display: flex; align-items: center; justify-content: center;
  width: 25px; height: 27px; background: #e2e2e2; border: 1px solid #c6c6c6; border-radius: 4px;
}
.tbtn svg { width: 17px; height: 17px; }

/* main */
.main { display: flex; height: 512px; overflow: hidden; }
.tools { flex: 0 0 42px; display: flex; flex-direction: column; padding-top: 6.150px; }
.tool { display: flex; align-items: center; justify-content: center; flex: 0 0 31.700px; width: 28px; margin-left: 5px; }
.tool svg { width: 25px; height: 25px; flex: 0 0 auto; }
.tool-active { flex-basis: 29px; margin-top: 1.350px; margin-bottom: 1.350px; background: #d8d8d8; border: 1px solid #c4c4c4; border-radius: 4px; }
.tool-active svg { width: 21px; height: 21px; }
.tool-text svg.ibeam { width: 4px; height: 20px; }
.more { width: 0; height: 0; margin: 2px 0 0 17px; border-top: 4.500px solid transparent; border-bottom: 4.500px solid transparent; border-left: 6px solid #333; }

.workspace {
  flex: 0 0 753px;
  display: grid;
  grid-template-columns: 16px 723px 14px;
  grid-template-rows: 3px 16px 476px 13px 4px;
}
.corner { grid-area: 2 / 1; display: flex; align-items: center; justify-content: center; }
.corner svg { width: 12px; height: 12px; }
.hruler { grid-area: 2 / 2; width: 723px; height: 16px; }
.corner-r { grid-area: 1 / 3 / 3 / 4; display: flex; justify-content: center; align-items: flex-end; padding-bottom: 2px; }
.corner-r svg { width: 13px; height: 13px; }
.vruler { grid-area: 3 / 1; width: 16px; height: 476px; }
.canvas { grid-area: 3 / 2; width: 723px; height: 476px; }
.rtext text { font-size: 7.500px; fill: #666; }
.vtrough { grid-area: 3 / 3; background: #bdbdbd; margin: 1px 0 0 1px; padding: 165px 0 0 4px; }
.vthumb { width: 6px; height: 143px; background: #828282; border-radius: 3px; }
.htrough { grid-area: 4 / 2; background: #bdbdbd; margin-top: 1px; padding: 4px 0 0 189px; }
.hthumb { width: 343px; height: 6px; background: #808080; border-radius: 3px; }
.hspacer { grid-area: 4 / 1; }
.cms { grid-area: 4 / 3; display: flex; justify-content: center; align-items: center; }
.cms svg { width: 12px; height: 12px; }

/* dock */
.dock { flex: 0 0 355px; padding: 3px 3px 0 7px; }
.dock-inner { border-left: 1px solid #cfcfcf; height: 100%; padding-left: 7px; }
.dock-title { display: flex; align-items: center; height: 21px; margin-top: 5px; font-size: 11.450px; color: #444; }
.dock-icon { width: 17px; height: 17px; flex: 0 0 auto; margin-left: 0; }
.dock-btns { display: flex; gap: 17px; margin-left: auto; margin-right: 8px; }
.dock-btns svg { width: 11px; height: 11px; }
.frame { border: 1px solid #c4c4c4; margin-top: 4px; padding: 3px 3px 5px; width: 337px; }
.tabs { display: flex; height: 25px; padding-left: 1px; }
.tab {
  display: flex; align-items: center; gap: 5px; align-self: flex-end;
  height: 22px; padding: 0 0 0 3px;
  border: 1px solid #c6c6c6; border-bottom: 0; border-radius: 3px 3px 0 0;
  background: #ededed; color: #555; font-size: 11.500px;
}
.tab svg { width: 13px; height: 13px; }
.tab-on { flex: 0 0 47px; height: 25px; background: #fff; padding-left: 6px; gap: 4px; }
.tab-paint { flex: 0 0 100px; }
.tab-style { flex: 0 0 97px; padding-left: 2px; gap: 4px; }
.swatch-fill { width: 12px; height: 12px; background: linear-gradient(135deg, #9dbadb, #eef3f8); }
.swatch-empty { width: 12px; height: 12px; background: #fff; border: 1px solid #666; }
.page { display: flex; flex-direction: column; height: 302px; background: #fff; border: 1px solid #c4c4c4; padding-top: 8px; }
.paint-row { display: flex; height: 28px; padding-left: 9.250px; }
.paint { display: flex; justify-content: center; align-items: center; flex: 0 0 31.400px; height: 28px; }
.paint svg { width: 16px; height: 16px; }
.paint-on { background: #d9d9d9; border: 1px solid #c8c8c8; border-radius: 4px; }
.paint-heart { flex-basis: 26px; margin-left: -1px; background: #dcdcdc; border: 1px solid #c8c8c8; border-radius: 4px; }
.flat-label { margin: 9px 0 0 10px; height: 18px; line-height: 18px; font-weight: 700; font-size: 11px; color: #444; letter-spacing: .2px; }
.modes { display: flex; gap: 4.400px; margin: 4px 0 0 11px; }
.mode {
  flex: 0 0 57px; height: 25px; display: flex; align-items: center; justify-content: center;
  background: #e6e6e6; border: 1px solid #cacaca; border-bottom-color: #b4b4b4; border-radius: 3px;
  font-size: 10px; color: #555;
}
.mode-on { background: #d6d6d6; }
.mode-cms { flex-basis: 61px; }
.sliders {
  display: grid; grid-template-columns: 31px 197px 64px; column-gap: 7px;
  grid-auto-rows: 32px; row-gap: 2px; margin-top: 4px; align-items: center;
}
.sliders .spin-s { margin-left: 2px; }
.slabel { text-align: right; color: #555; font-size: 11.500px; }
.spin-s { height: 30px; width: 64px; padding-left: 9px; padding-right: 1px; }
.spin-s .arrows { gap: 10px; }
.bar { position: relative; height: 32px; border: 1.500px solid #111; }
.bar-r { background: linear-gradient(90deg, #0012be, #ff12be); }
.bar-g { background: linear-gradient(90deg, #f000be, #f0ffbe); }
.bar-b { background: linear-gradient(90deg, #f01200, #f012ff); }
.bar-a {
  background:
    linear-gradient(90deg, rgba(240,18,190,0), #f012be),
    conic-gradient(#555 25%, #aaa 0 50%, #555 0 75%, #aaa 0) 0 0 / 16px 16px;
}
.mk-top, .mk-bot { position: absolute; left: var(--v); width: 0; height: 0; margin-left: -4px; border-left: 4px solid transparent; border-right: 4px solid transparent; }
.mk-top { top: 0; border-top: 4px solid #111; }
.mk-bot { bottom: 0; border-bottom: 4px solid #111; }
.page-foot { display: flex; align-items: center; margin-top: auto; height: 33px; padding: 0 10px 0 12px; margin-bottom: 4px; }
.foot-btn { display: flex; align-items: center; justify-content: center; flex: 0 0 16px; height: 33px; background: #ececec; margin-right: 4px; }
.foot-btn svg { width: 16px; height: 16px; }
.picker { margin-left: 9px; }
.picker svg { width: 16px; height: 16px; }
.rgba-label { margin-left: auto; font-size: 9.200px; color: #555; margin-right: 4px; }
.rgba { flex: 0 0 75px; height: 26px; display: flex; align-items: center; padding-left: 9px; border: 1px solid #c4c4c4; border-radius: 4px; font-size: 10.500px; color: #444; }
.meter {
  display: flex; align-items: center; height: 30px; margin-top: 6px; padding: 0 1px 0 6px;
  background: #fff; border: 1px solid #c4c4c4; border-radius: 3px; font-size: 11.500px; color: #444;
}
.meter-full { margin-top: 7px; padding-left: 2px; }
.meter-val { margin-left: auto; margin-right: 8px; }
.meter .arrows { gap: 9px; margin-left: 4px; }
.meter-fill {
  display: flex; justify-content: space-between; align-items: center;
  flex: 1 1 auto; height: 25px; padding: 0 7px 0 4px; margin-right: 3px;
  background: #4a90d9; color: #fff;
}
.dock-rule { height: 0; margin: 5px 0 0; border: 0; border-top: 2px solid #d4d4d4; width: 337px; }
.dock-title-2 { margin-top: 9px; }
.frame-2 { margin-top: 4px; padding: 3px; height: 60px; }
.group { margin: 0; padding: 0 3px; height: 50px; border: 1px solid #c4c4c4; border-radius: 2px; }
.group legend { padding: 0 2px; margin-left: 1px; font-weight: 700; font-size: 11px; color: #444; }
.mini-input { height: 26px; width: 126px; margin: 0 0 0 auto; background: #f4f4f4; border: 1px solid #c4c4c4; border-radius: 4px; }

.dock-scroll { flex: 0 0 15px; margin-top: 3px; background: #bdbdbd; padding: 2px 0 0 4px; }
.dock-thumb { width: 6px; height: 230px; background: #808080; border-radius: 3px; }

.snapbar { flex: 0 0 35px; display: flex; flex-direction: column; padding: 6.250px 0 0 4px; }
.snap { display: flex; align-items: center; justify-content: center; flex: 0 0 27.500px; width: 26px; }
.snap svg { width: 20px; height: 20px; }
.snap-on { background: #dadada; border: 1px solid #c8c8c8; border-radius: 4px; }
.snap-sep { flex: 0 0 12.500px; background: linear-gradient(#d0d0d0, #d0d0d0) center / 70% 1px no-repeat; }
.snap-sep-faint { opacity: .7; }
.more-snap { margin: 34px 0 0 10px; }

/* palette */
.palette { display: flex; align-items: center; height: 14px; }
.nocolor { flex: 0 0 14px; }
.nocolor svg { width: 14px; height: 14px; }
.swatches { display: flex; flex: 0 0 1173px; height: 14px; overflow: hidden; }
.swatches i { flex: 0 0 12.850px; height: 14px; }
.swatches i.swatch-end { flex-basis: 5px; }
.pal-arrow { width: 0; height: 0; margin-left: 3px; border-top: 4.500px solid transparent; border-bottom: 4.500px solid transparent; border-right: 6px solid #222; }

.bottom { height: 10px; margin-top: 2px; background: #c2c2c2; padding: 2px 0 0 3px; }
.bottom-thumb { width: 247px; height: 7px; background: #808080; border-radius: 3px; }
```
